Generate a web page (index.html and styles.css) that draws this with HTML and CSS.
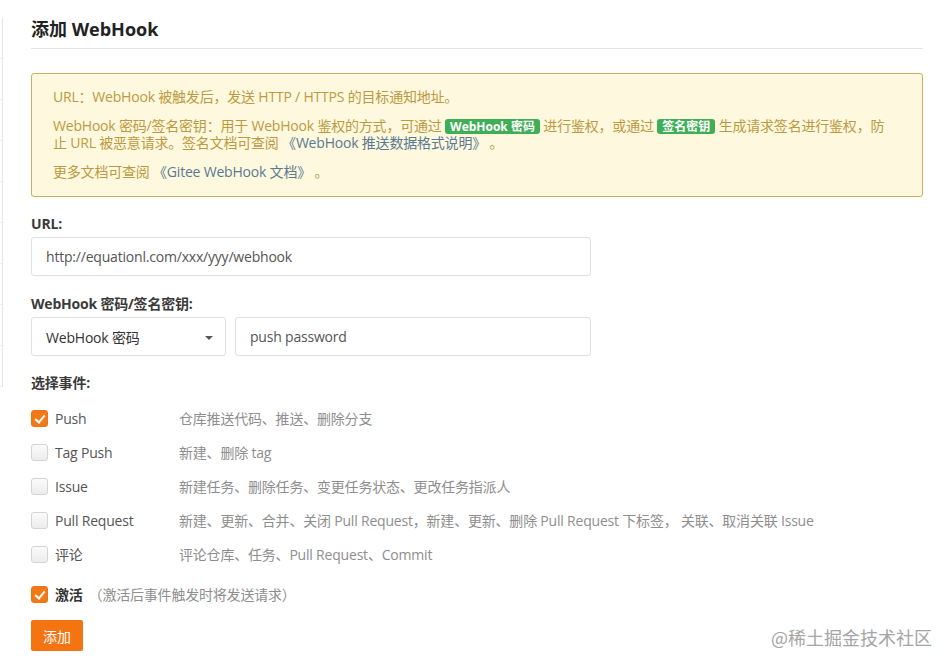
FILE: index.html
```html
<!DOCTYPE html>
<html lang="zh">
<head>
<meta charset="utf-8">
<title>添加 WebHook</title>
<link rel="stylesheet" href="styles.css">
</head>
<body>
<div class="layout">
  <aside class="sidebar">
    <div class="side-item"></div><div class="side-item"></div><div class="side-item"></div>
    <div class="side-item"></div><div class="side-item"></div><div class="side-item"></div>
    <div class="side-item"></div><div class="side-item"></div><div class="side-item"></div>
  </aside>
  <main class="main">
    <h1 class="title">添加 WebHook</h1>
    <div class="alert">
      <p>URL：WebHook 被触发后，发送 HTTP / HTTPS 的目标通知地址。</p>
      <p>WebHook 密码/签名密钥：用于 WebHook 鉴权的方式，可通过 <span class="badge">WebHook 密码</span> 进行鉴权，或通过 <span class="badge">签名密钥</span> 生成请求签名进行鉴权，防止 URL 被恶意请求。签名文档可查阅 <a class="link">《WebHook 推送数据格式说明》</a> 。</p>
      <p>更多文档可查阅 <a class="link">《Gitee WebHook 文档》</a> 。</p>
    </div>

    <div class="field field-url">
      <div class="label">URL:</div>
      <div class="input input-url">http://equationl.com/xxx/yyy/webhook</div>
    </div>

    <div class="field field-pass">
      <div class="label">WebHook 密码/签名密钥:</div>
      <div class="row-inputs">
        <div class="input select">WebHook 密码<span class="caret"></span></div>
        <div class="input input-pass">push password</div>
      </div>
    </div>

    <div class="field field-events">
      <div class="label">选择事件:</div>
      <div class="events">
        <div class="event"><span class="cb checked"></span><span class="ev-name">Push</span><span class="ev-desc">仓库推送代码、推送、删除分支</span></div>
        <div class="event"><span class="cb"></span><span class="ev-name">Tag Push</span><span class="ev-desc">新建、删除 tag</span></div>
        <div class="event"><span class="cb"></span><span class="ev-name">Issue</span><span class="ev-desc">新建任务、删除任务、变更任务状态、更改任务指派人</span></div>
        <div class="event"><span class="cb"></span><span class="ev-name">Pull Request</span><span class="ev-desc">新建、更新、合并、关闭 Pull Request，新建、更新、删除 Pull Request 下标签， 关联、取消关联 Issue</span></div>
        <div class="event"><span class="cb"></span><span class="ev-name">评论</span><span class="ev-desc">评论仓库、任务、Pull Request、Commit</span></div>
      </div>
    </div>

    <div class="active-row"><span class="cb checked"></span><span class="active-name">激活</span><span class="active-desc">（激活后事件触发时将发送请求）</span></div>

    <div class="actions"><button class="btn">添加</button></div>
  </main>
</div>
<div class="watermark">@稀土掘金技术社区</div>
</body>
</html>
```

FILE: styles.css
```css
* { box-sizing: border-box; }
html, body { margin: 0; padding: 0; background: #fff; }
body {
  font-family: "Open Sans", "Noto Sans CJK SC", sans-serif;
  font-size: 14px;
  letter-spacing: -0.2px;
  color: #333;
  width: 950px;
  height: 667px;
  overflow: hidden;
  position: relative;
}
.layout { display: flex; align-items: flex-start; }
.sidebar {
  width: 3px;
  margin-top: 18px;
  border-right: 1px solid #e6e6e6;
  flex: none;
}
.side-item { height: 41px; border-bottom: 1px solid #efefef; }
.main { width: 892px; margin-left: 28px; padding-top: 17px; }
.title {
  margin: 0;
  font-size: 18px;
  line-height: 24px;
  font-weight: 700;
  letter-spacing: 0;
  color: #222;
  padding-bottom: 7px;
  border-bottom: 1px solid #e3e3e3;
}
.alert {
  margin-top: 24px;
  background: #fef8de;
  border: 1px solid #cdb05a;
  border-radius: 3px;
  padding: 14px 32px 16px 21px;
  color: #bc9a42;
  line-height: 17px;
}
.alert p { margin: 0 0 12px; }
.alert p:last-child { margin-bottom: 0; }
.badge {
  display: inline-block;
  background: #3fae57;
  color: #fff;
  font-weight: 700;
  font-size: 12px;
  line-height: 15px;
  padding: 0 5px;
  border-radius: 3px;
  letter-spacing: 0;
}
.link { color: #5a7a92; }
.label { font-weight: 700; color: #3a3a3a; line-height: 17px; }
.field-url { margin-top: 18px; }
.field-pass { margin-top: 19px; }
.field-events { margin-top: 18px; }
.input {
  height: 39px;
  border: 1px solid #e0e0e0;
  border-radius: 3px;
  display: flex;
  align-items: center;
  padding: 0 14px;
  color: #555;
  background: #fff;
}
.input-url { width: 560px; margin-top: 5px; }
.row-inputs { display: flex; gap: 9px; margin-top: 5px; }
.select { width: 195px; position: relative; color: #333; }
.caret {
  position: absolute;
  right: 12px;
  top: 18px;
  width: 0; height: 0;
  border-left: 4px solid transparent;
  border-right: 4px solid transparent;
  border-top: 4px solid #555;
}
.input-pass { width: 356px; }
.events { margin-top: 10px; }
.event { display: flex; align-items: center; height: 34px; }
.cb {
  width: 17px; height: 17px;
  flex: none;
  border: 1px solid #d4d4d4;
  border-radius: 3px;
  background: linear-gradient(#fbfbfb, #ececec);
  position: relative;
}
.cb.checked { background: #f27a16; border-color: #ee7410; }
.cb.checked::after {
  content: "";
  position: absolute;
  left: 5px; top: 2px;
  width: 4px; height: 8px;
  border: solid #fff;
  border-width: 0 2.5px 2.5px 0;
  transform: rotate(40deg);
}
.ev-name { margin-left: 7px; width: 124px; color: #555; }
.ev-desc { color: #8e8e8e; }
.active-row { display: flex; align-items: center; height: 34px; margin-top: 6px; }
.active-name { margin-left: 7px; font-weight: 700; color: #333; }
.active-desc { margin-left: 6px; color: #8e8e8e; }
.actions { margin-top: 9px; }
.btn {
  font-family: "Open Sans", "Noto Sans CJK SC", sans-serif;
  font-size: 14px;
  background: #f57412;
  color: #fff;
  border: none;
  border-radius: 2px;
  height: 31px;
  width: 52px;
  padding: 0;
}
.watermark {
  position: absolute;
  right: 18px;
  top: 624px;
  font-family: "Noto Sans CJK SC", sans-serif;
  font-size: 18px;
  letter-spacing: 0;
  color: #a5a5a5;
}
```
